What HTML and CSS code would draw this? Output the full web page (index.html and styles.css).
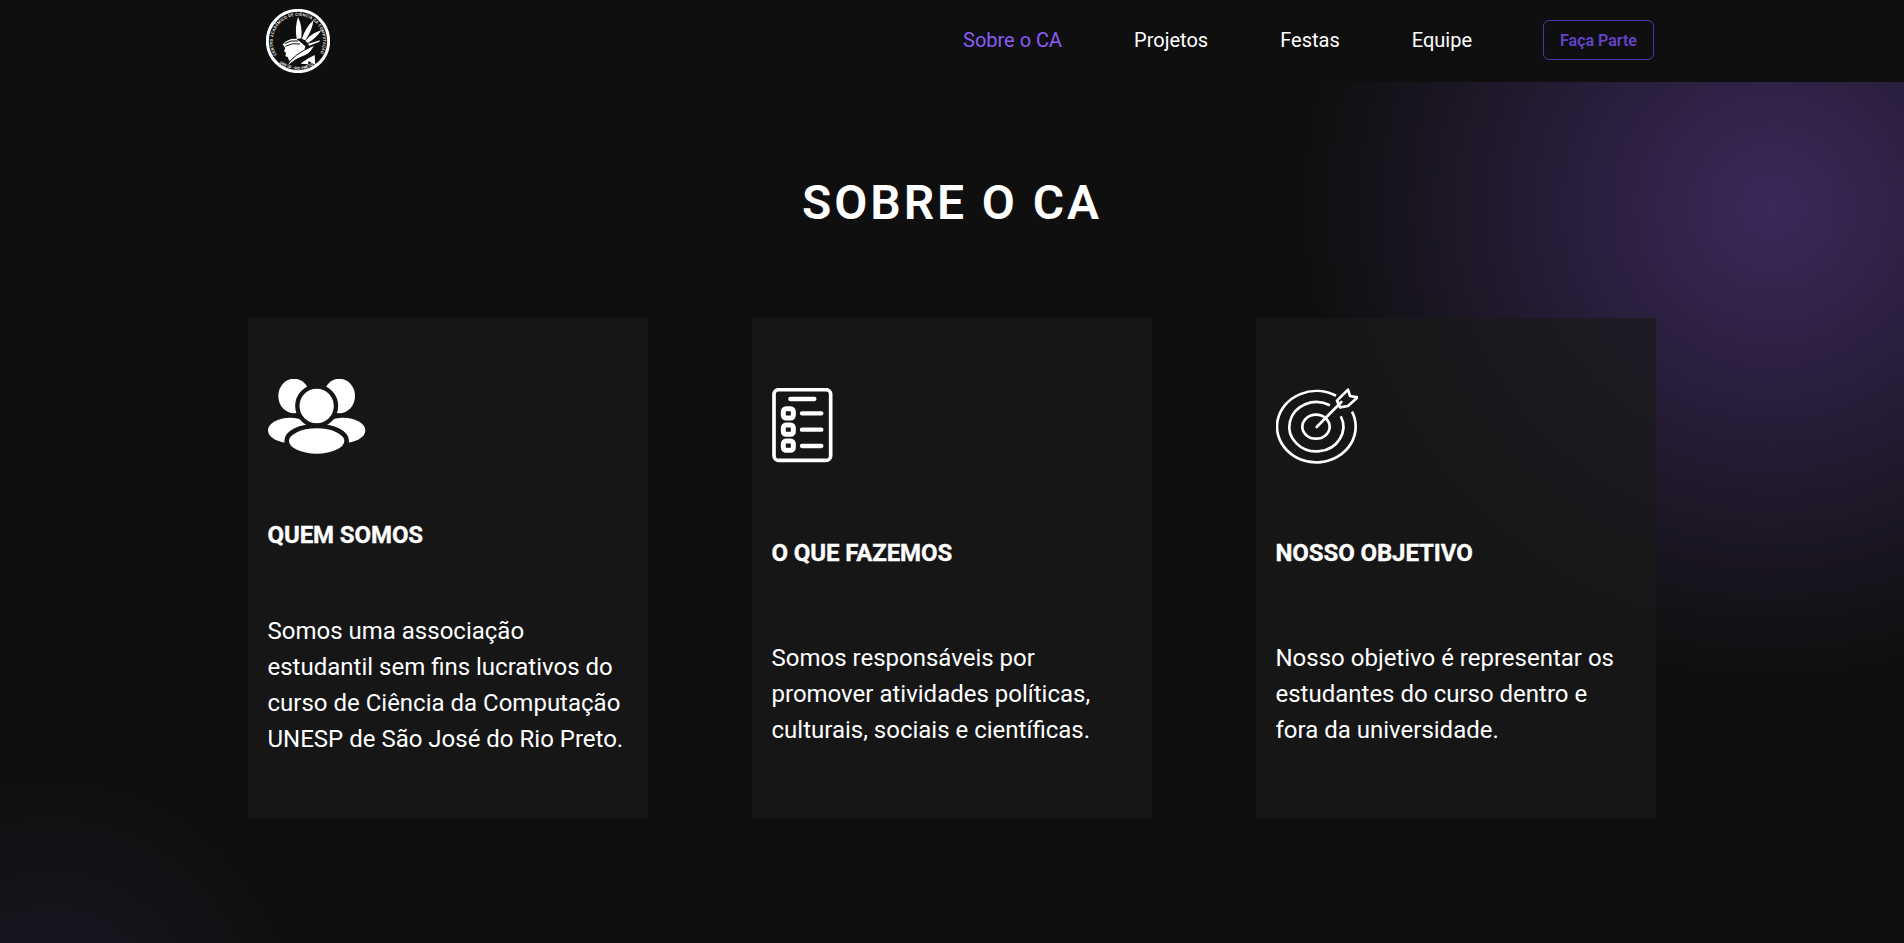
FILE: index.html
```html
<!DOCTYPE html>
<html lang="pt-BR">
<head>
<meta charset="utf-8">
<title>Sobre o CA</title>
<link rel="stylesheet" href="styles.css">
</head>
<body>
<header class="site-header">
  <div class="header-inner">
    <a class="logo" href="#" aria-label="Centro Acadêmico">
      <svg class="logo-svg" viewBox="80 22 192 192" xmlns="http://www.w3.org/2000/svg">
        <circle cx="176" cy="118" r="92" fill="none" stroke="#fff" stroke-width="9"/>
        <defs>
          <path id="arc-top" d="M 112.3 159.4 A 76 76 0 1 1 239.7 159.4"/>
          <path id="arc-bot" d="M 121 184 A 86 86 0 0 0 231 184"/>
        </defs>
        <text class="logo-text" textLength="320"><textPath href="#arc-top">CENTRO ACADÊMICO DE CIÊNCIA DA COMPUTAÇÃO</textPath></text>
        <text class="logo-text"><textPath href="#arc-bot">UNESP - RIO PRETO</textPath></text>
        <path fill="#fff" d="M172 112Q166 76 176 46Q190 74 186 110ZM188 112Q198 78 222 56Q220 84 198 116ZM198 118Q216 94 246 86Q232 108 206 124ZM206 126L242 116L240 120L210 132Z"/>
        <path fill="#fff" d="M130 128Q150 108 172 112L198 134L194 150Q170 160 150 178L145 166L138 164L140 154L134 148L138 140Z"/>
        <path fill="none" stroke="#0f0f0f" stroke-width="3" d="M136 126Q155 114 176 118M138 134Q158 122 182 127"/>
        <path fill="#fff" stroke="#0f0f0f" stroke-width="3" d="M140 196Q160 158 226 130Q214 156 196 162Q170 170 140 196Z"/>
        <path fill="#fff" d="M184 186Q198 174 226 160L228 190L208 178L206 188Z"/>
      </svg>
    </a>
    <nav class="nav">
      <a class="nav-link active" href="#">Sobre o CA</a>
      <a class="nav-link" href="#">Projetos</a>
      <a class="nav-link" href="#">Festas</a>
      <a class="nav-link" href="#">Equipe</a>
      <a class="nav-btn" href="#">Faça Parte</a>
    </nav>
  </div>
</header>
<main class="about">
  <h1 class="title">SOBRE O CA</h1>
  <div class="cards">
    <article class="card">
      <svg class="icon" width="98" height="80" viewBox="69 57 294 240" xmlns="http://www.w3.org/2000/svg">
        <ellipse cx="147" cy="108" rx="47" ry="52" fill="#fff"/>
        <ellipse cx="283" cy="108" rx="47" ry="52" fill="#fff"/>
        <ellipse cx="135" cy="211" rx="66" ry="38" fill="#fff"/>
        <ellipse cx="295" cy="211" rx="66" ry="38" fill="#fff"/>
        <circle cx="215" cy="138" r="58" fill="#fff" stroke="#161616" stroke-width="13"/>
        <ellipse cx="215" cy="243" rx="90" ry="45" fill="#fff" stroke="#161616" stroke-width="14"/>
      </svg>
      <h2 class="card-title">QUEM SOMOS</h2>
      <p class="card-text">Somos uma associação estudantil sem fins lucrativos do curso de Ciência da Computação UNESP de São José do Rio Preto.</p>
    </article>
    <article class="card">
      <svg class="icon" width="62" height="80" viewBox="51 40 186 240" xmlns="http://www.w3.org/2000/svg" fill="none" stroke="#fff">
        <rect x="57" y="45" width="170" height="212" rx="14" stroke-width="11"/>
        <path d="M106 73H178M141 116H199M141 165H199M141 214H199" stroke-width="13" stroke-linecap="round"/>
        <rect x="85" y="102" width="30" height="28" rx="8" stroke-width="15"/>
        <rect x="85" y="151" width="30" height="28" rx="8" stroke-width="15"/>
        <rect x="85" y="199" width="30" height="28" rx="8" stroke-width="15"/>
      </svg>
      <h2 class="card-title">O QUE FAZEMOS</h2>
      <p class="card-text">Somos responsáveis por promover atividades políticas, culturais, sociais e científicas.</p>
    </article>
    <article class="card">
      <svg class="icon" width="82" height="80" viewBox="30 38 246 240" xmlns="http://www.w3.org/2000/svg" fill="none" stroke="#fff" stroke-width="8">
        <path d="M210 61.3A118 107 0 1 0 258 108.8"/>
        <path d="M191.5 89.9A81 74 0 1 0 224.4 122.7"/>
        <ellipse cx="150" cy="154" rx="41" ry="36"/>
        <path d="M152 155L226 80" stroke-linecap="round"/>
        <path d="M213 76L246 43L252 62L275 66L246 92L222 96Z" stroke-linejoin="round"/>
      </svg>
      <h2 class="card-title">NOSSO OBJETIVO</h2>
      <p class="card-text">Nosso objetivo é representar os estudantes do curso dentro e fora da universidade.</p>
    </article>
  </div>
</main>
</body>
</html>
```
FILE: styles.css
```css
* { box-sizing: border-box; }
html, body { margin: 0; height: 100%; }
body {
  background: #0f0f0f;
  color: #fff;
  font-family: Roboto, "Liberation Sans", sans-serif;
  overflow: hidden;
}
.site-header { height: 82px; background: #0f0f0f; }
.header-inner {
  width: 1408px;
  height: 80px;
  margin: 0 auto;
  padding: 0 2px 0 18px;
  display: flex;
  align-items: center;
  justify-content: space-between;
}
.logo { display: block; width: 64px; height: 64px; margin-top: 2px; }
.logo-svg { display: block; width: 64px; height: 64px; }
.logo-text { font-family: Roboto, sans-serif; font-size: 12px; font-weight: 500; fill: #fff; }
.nav { display: flex; align-items: center; gap: 72px; }
.nav-link { color: #fff; font-size: 20px; text-decoration: none; }
.nav-link.active { color: #8b5cf6; }
.nav-btn {
  display: flex;
  align-items: center;
  justify-content: center;
  width: 111px;
  height: 40px;
  margin-left: -1px;
  border: 1px solid #4e35a8;
  border-radius: 6px;
  color: #6443cc;
  font-size: 16px;
  font-weight: 600;
  text-decoration: none;
}
.about {
  height: 861px;
  padding-top: 89px;
  background:
    radial-gradient(circle 465px at 1772px 125px, rgba(60, 41, 92, .98), rgba(60, 41, 92, 0) 100%),
    radial-gradient(circle 240px at 50px 940px, rgba(60, 41, 92, .3), rgba(60, 41, 92, 0) 100%);
}
.title {
  margin: 0 0 83px;
  text-align: center;
  font-size: 48px;
  line-height: 64px;
  font-weight: 600;
  letter-spacing: 2.9px;
}
.cards { width: 1408px; margin: 0 auto; display: flex; justify-content: space-between; }
.card {
  width: 400px;
  height: 500px;
  padding: 0 23px 0 19.5px;
  background: rgba(26, 26, 26, .7);
  display: flex;
  flex-direction: column;
  justify-content: space-evenly;
  align-items: flex-start;
}
.icon { display: block; flex: none; margin-left: .5px; }
.card-title {
  margin: 0;
  padding-bottom: 3px;
  font-size: 24px;
  line-height: 28px;
  font-weight: 700;
  letter-spacing: -.1px;
  -webkit-text-stroke: .35px #fff;
}
.card-text { margin: 0; font-size: 24px; line-height: 36px; }
```
